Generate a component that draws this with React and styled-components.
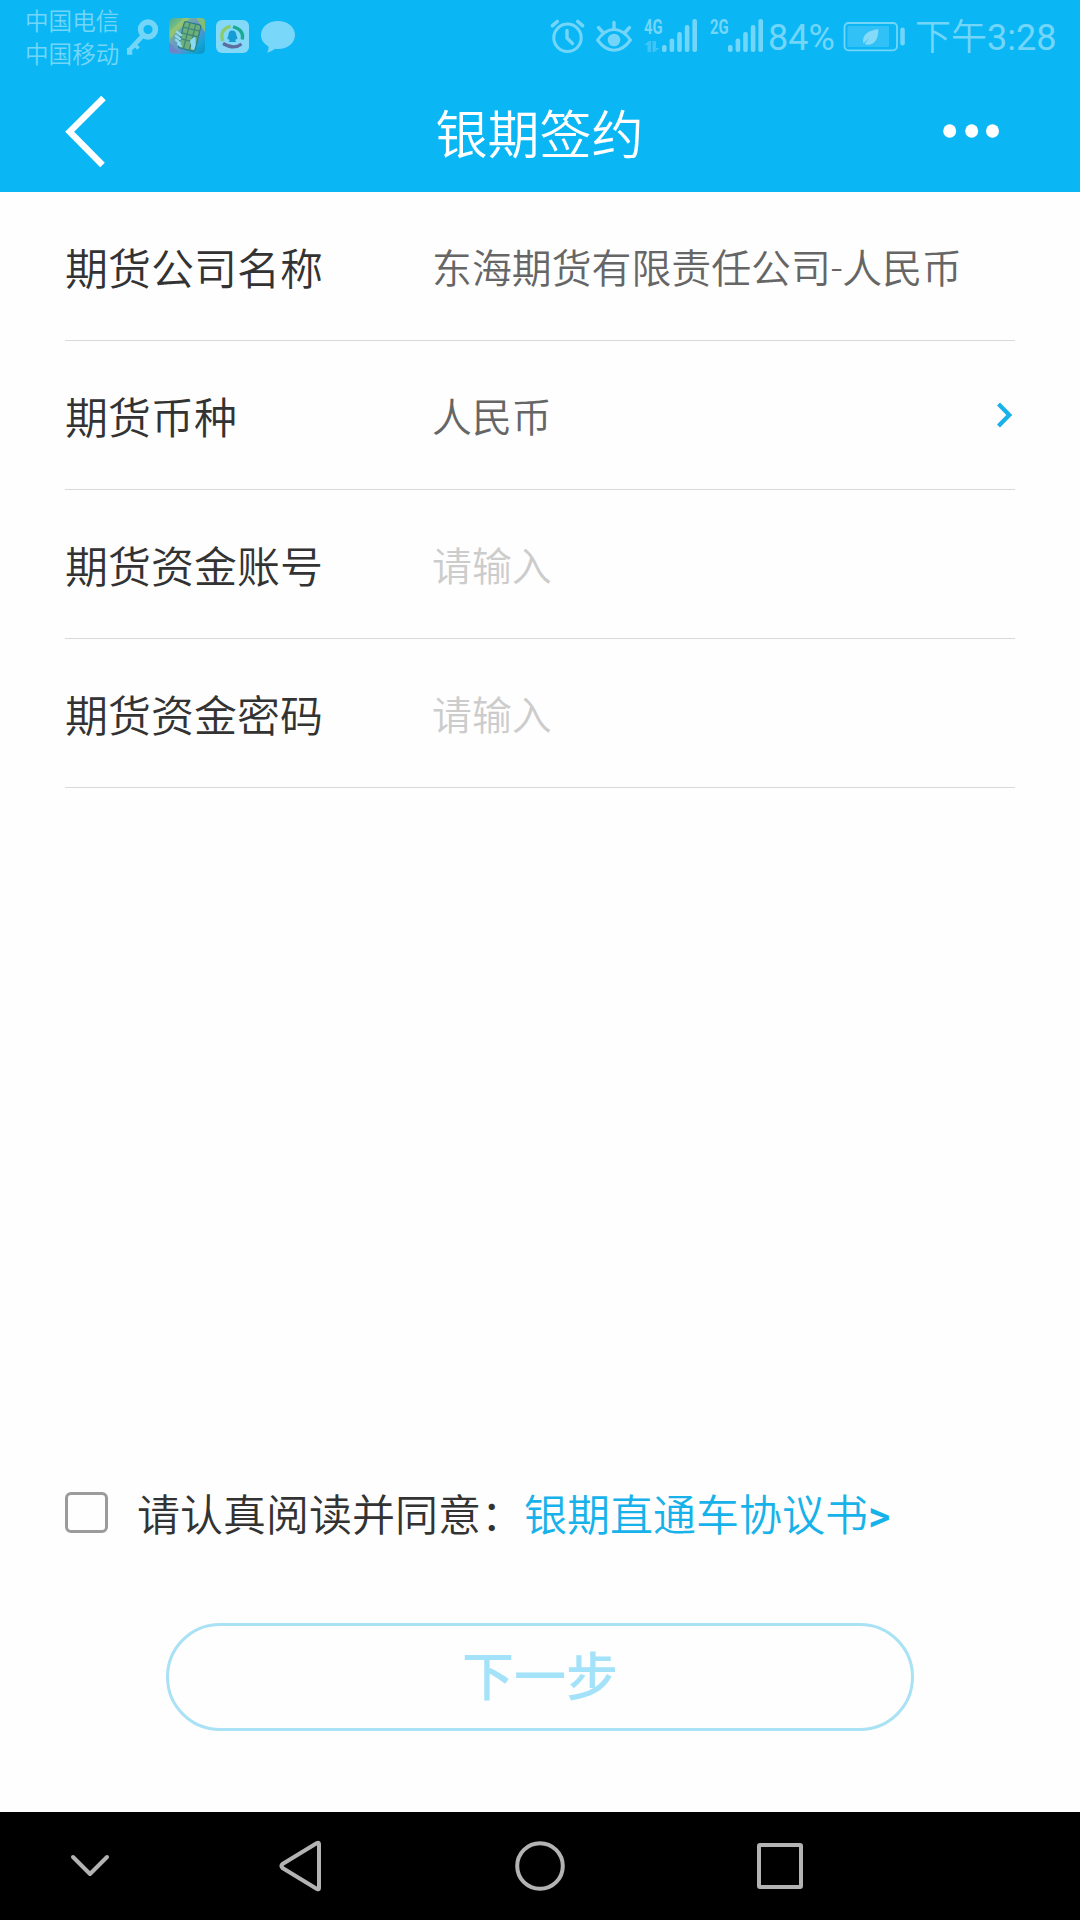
import React, { Component } from "react";
import styled, { createGlobalStyle } from "styled-components";

const GlobalStyle = createGlobalStyle`
  * {
    box-sizing: border-box;
  }
  body {
    margin: 0;
    background: #fefefe;
    font-family: "Noto Sans CJK SC", sans-serif;
  }
  svg {
    display: block;
    flex: none;
  }
`;

const Screen = styled.div`
  display: flex;
  flex-direction: column;
  width: 1080px;
  height: 1920px;
  overflow: hidden;
`;

const Header = styled.header`
  height: 192px;
  background: #0ab6f4;
`;

const StatusBar = styled.div`
  display: flex;
  justify-content: space-between;
  height: 72px;
  padding: 0 24px 0 25px;
  color: #73d6f9;
`;

const StatusGroup = styled.div`
  display: flex;
  height: 72px;
`;

const Carriers = styled.div`
  width: 102px;
  padding-top: 4px;
  font-size: 23.6px;
  font-weight: 350;
  line-height: 33px;
  white-space: nowrap;
`;

const StatusText = styled.span`
  width: ${props => props.$width}px;
  font-family: Roboto, "Noto Sans CJK SC", sans-serif;
  font-size: 36px;
  font-weight: 400;
  line-height: 77px;
  white-space: nowrap;
`;

const Meridiem = styled.span`
  font-weight: 350;
`;

const Signal = styled.div`
  display: flex;
  width: ${props => props.$width}px;
`;

const Network = styled.div`
  display: flex;
  flex-direction: column;
  width: 18px;
  padding-top: 17px;
  font-family: Roboto, sans-serif;
  font-size: 20px;
  font-weight: 700;
  line-height: 20px;

  span {
    transform: scaleX(0.74);
    transform-origin: left;
  }
`;

const TitleBar = styled.div`
  display: grid;
  grid-template-columns: 140px 1fr 140px;
  height: 120px;
`;

const Title = styled.h1`
  margin: 0;
  color: #fff;
  font-size: 52px;
  font-weight: 350;
  line-height: 119px;
  text-align: center;
  text-indent: -1px;
`;

const Form = styled.main`
  flex: 1;
  padding: 0 65px;
`;

const Row = styled.div`
  display: flex;
  align-items: center;
  height: 149px;
  border-bottom: 1px solid #d9d9d9;
`;

const Label = styled.span`
  width: 367px;
  color: #333;
  font-size: 43px;
  font-weight: 350;
  line-height: 58px;
`;

const Value = styled.span`
  flex: 1;
  padding-top: 8px;
  color: ${props => (props.$empty ? "#ccc" : "#666")};
  font-family: Roboto, "Noto Sans CJK SC", sans-serif;
  font-size: 39.9px;
  font-weight: 350;
  line-height: 60px;
  white-space: nowrap;
`;

const Footer = styled.footer`
  display: flex;
  flex-direction: column;
  align-items: center;
  height: 322px;
`;

const Agreement = styled.div`
  display: flex;
  width: 100%;
  height: 133px;
  padding-left: 65px;
  color: #333;
  font-family: Roboto, "Noto Sans CJK SC", sans-serif;
  font-size: 43px;
  font-weight: 350;
  line-height: 53px;
  white-space: nowrap;
`;

const Checkbox = styled.span`
  width: 43px;
  height: 41px;
  margin: 2px 29px 0 0;
  border: 3px solid #9b9b9b;
  border-radius: 6px;
`;

const AgreementLink = styled.a`
  color: #17b2ea;

  b {
    font-weight: 500;
  }
`;

const NextButton = styled.button`
  width: 748px;
  height: 108px;
  padding: 0 0 6px;
  border: 3px solid #a9e1f5;
  border-radius: 54px;
  background: none;
  color: #a4e2f9;
  font-family: inherit;
  font-size: 52px;
  font-weight: 500;
  line-height: 96px;
`;

const NavBar = styled.nav`
  display: grid;
  grid-template-columns: 180px 240px 240px 240px;
  height: 108px;
  background: #000;
`;

const NavItem = styled.svg`
  fill: none;
  stroke: #b3b3b3;
  stroke-width: 4;
  stroke-linecap: round;
  stroke-linejoin: round;
`;

const rows = [
  { label: "期货公司名称", value: "东海期货有限责任公司-人民币" },
  { label: "期货币种", value: "人民币", arrow: true },
  { label: "期货资金账号" },
  { label: "期货资金密码" }
];

// notification icons on the left of the status bar
const Notifications = () => (
  <svg width="170" height="72" viewBox="127 0 170 72">
    <g fill="none" stroke="#73d6f9">
      <circle cx="148" cy="29.5" r="7.4" strokeWidth="5.6" />
      <path d="M142.5 36L128.5 51" strokeWidth="4.6" />
      <path d="M134 44l4.5 4.5M128.8 48v5h3.5" strokeWidth="3.6" />
    </g>
    <defs>
      <linearGradient id="app" x1="0" y1="0" x2="1" y2="1">
        <stop offset="0" stopColor="#4aa79b" />
        <stop offset="0.2" stopColor="#75bd83" />
        <stop offset="0.42" stopColor="#6e9cc0" />
        <stop offset="0.6" stopColor="#5c92cd" />
        <stop offset="0.8" stopColor="#12a5d5" />
        <stop offset="1" stopColor="#0a8fc4" />
      </linearGradient>
    </defs>
    <rect x="169" y="18" width="36" height="36" rx="5" fill="url(#app)" />
    <path d="M170 31L184 18h6L170 39z" fill="#9bc76b" opacity="0.8" />
    <path d="M196 18h5q4 0 4 4v10z" fill="#86bd76" />
    <path d="M169 42l10 11h-6q-4 0-4-4z" fill="#6f83c5" />
    <g transform="rotate(14 190 37)">
      <rect x="181" y="23" width="17" height="27" rx="2" fill="#6fae7c" stroke="#277c8b" strokeWidth="1.2" />
      <path d="M181 29h17M181 35h17M181 41h17M186.5 23v27M192.5 23v27" stroke="#3d8a75" strokeWidth="1.3" />
    </g>
    <path d="M177 32l4 3M176 36l4 3M176 40l4 3M178 44l3 2" stroke="#8fdcef" strokeWidth="2.2" strokeLinecap="round" />
    <path d="M195 37q-5 2-5 5 2 3 1 7l3 1q3-6 1-13z" fill="#8adaf2" />
    <rect x="216" y="20" width="33" height="33" rx="6" fill="#85d9f8" />
    <g fill="none" strokeWidth="3.2">
      <path d="M222.8 41Q219 30 230.5 26" stroke="#8dca69" />
      <path d="M233 26.8Q244.5 30 242.3 39.5" stroke="#17ab94" />
      <path d="M241.5 44Q234 50 223 43.5" stroke="#5d6e9e" />
    </g>
    <path d="M232.3 30.5c3.4 0 4 3 4 4.8 1.1 1.4 1.4 3.2.7 4-.5.3-1-.3-1-.3l-.8 1.5 1 1.5h-7.6l1-1.5-.8-1.5s-.7.8-1 .2c-.7-1 0-2.8.7-3.9 0-2 .4-4.8 3.8-4.8z" fill="#159dd3" />
    <path d="M278 21c9.5 0 17 6 17 14s-7.5 14-17 14q-1.5 0-3-.2-3.5 3.2-8 4 1.8-2.8 1.5-6.4C264 44 261 40 261 35c0-8 7.5-14 17-14z" fill="#79d7f9" />
  </svg>
);

const AlarmAndEye = () => (
  <svg width="94" height="72" viewBox="550 0 94 72" fill="none" stroke="#73d6f9" strokeWidth="3">
    <circle cx="567.5" cy="37.8" r="13.7" />
    <path d="M567 30.5v7.5l5.5 5.5" strokeWidth="3.4" strokeLinecap="round" strokeLinejoin="round" />
    <path d="M552.5 25.7l4.7-4.2M582.5 25.7l-4.7-4.2" strokeWidth="3.6" strokeLinecap="round" />
    <path d="M597.5 40Q605 29.5 614 29.5T630.5 40Q623 50.3 614 50.3T597.5 40z" strokeLinejoin="round" />
    <circle cx="614" cy="40" r="6.3" fill="#73d6f9" stroke="none" />
    <path d="M614 22.5v6M598.5 27.5l4.5 5M629.5 27.5l-4.5 5" strokeWidth="3.4" strokeLinecap="round" />
  </svg>
);

const SignalBars = () => (
  <svg width="36" height="72" fill="#73d6f9">
    {[45, 38.5, 32, 25, 19].map((top, i) => (
      <rect key={top} x={i * 7.6} y={top} width="4.6" height={52 - top} rx="2" />
    ))}
  </svg>
);

const DataArrows = () => (
  <svg width="16" height="16" fill="#3cc5f7">
    <path d="M0 8l5-4h2v11H3.5V8zM8.5 4H12v7h3.5l-5 4h-2z" />
  </svg>
);

const Battery = () => (
  <svg width="72" height="72" viewBox="843 0 72 72">
    <rect x="844.5" y="23" width="52.5" height="27.3" rx="4" fill="none" stroke="#73d6f9" strokeWidth="1.8" />
    <rect x="847.5" y="26" width="41.5" height="21" rx="1" fill="#32c1f6" />
    <rect x="900.3" y="27.5" width="4.5" height="18" rx="2.2" fill="#73d6f9" />
    <path d="M878.3 29c.2 9-3 15.7-10.3 15.7-1.5 0-2.5-.4-3.2-1l4.5-5.7-6 5.5c-1.6-9 5.2-13 15-14.5z" fill="#84daf9" />
  </svg>
);

class App extends Component {
  renderRow = row => (
    <Row key={row.label}>
      <Label>{row.label}</Label>
      <Value $empty={!row.value}>{row.value || "请输入"}</Value>
      {row.arrow && (
        <svg width="18" height="28" fill="none" stroke="#17b2ea" strokeWidth="4.2">
          <path d="M1.5 3L12.3 14 1.5 25" />
        </svg>
      )}
    </Row>
  );

  render() {
    return (
      <Screen>
        <GlobalStyle />
        <Header>
          <StatusBar>
            <StatusGroup>
              <Carriers>
                <div>中国电信</div>
                <div>中国移动</div>
              </Carriers>
              <Notifications />
            </StatusGroup>
            <StatusGroup>
              <AlarmAndEye />
              <Signal $width={66}>
                <Network>
                  <span>4G</span>
                  <DataArrows />
                </Network>
                <SignalBars />
              </Signal>
              <Signal $width={58}>
                <Network>
                  <span>2G</span>
                </Network>
                <SignalBars />
              </Signal>
              <StatusText $width={75}>84%</StatusText>
              <Battery />
              <StatusText $width={141}>
                <Meridiem>下午</Meridiem>3:28
              </StatusText>
            </StatusGroup>
          </StatusBar>
          <TitleBar>
            <svg width="140" height="120" fill="none" stroke="#fff" strokeWidth="6.4">
              <path d="M103.5 26L69.7 59.7 102.5 93" />
            </svg>
            <Title>银期签约</Title>
            <svg width="140" height="120" fill="#fff">
              <ellipse cx="9.7" cy="59" rx="6.5" ry="6.8" />
              <ellipse cx="31.7" cy="59" rx="6.5" ry="6.8" />
              <ellipse cx="52.5" cy="59" rx="6.5" ry="6.8" />
            </svg>
          </TitleBar>
        </Header>
        <Form>{rows.map(this.renderRow)}</Form>
        <Footer>
          <Agreement>
            <Checkbox />
            <span>请认真阅读并同意：</span>
            <AgreementLink>
              银期直通车协议书<b>&gt;</b>
            </AgreementLink>
          </Agreement>
          <NextButton>下一步</NextButton>
        </Footer>
        <NavBar>
          <NavItem width="180" height="108">
            <path d="M73 45l17 17 17-17" />
          </NavItem>
          <NavItem width="240" height="108">
            <path d="M139 32v44q0 2-2 1l-34.5-21q-2-2 0-4l34.5-21q2-1 2 1z" />
          </NavItem>
          <NavItem width="240" height="108">
            <circle cx="120" cy="54" r="22.8" />
          </NavItem>
          <NavItem width="240" height="108">
            <rect x="99" y="33" width="42" height="42" rx="1" />
          </NavItem>
        </NavBar>
      </Screen>
    );
  }
}

export default App;
